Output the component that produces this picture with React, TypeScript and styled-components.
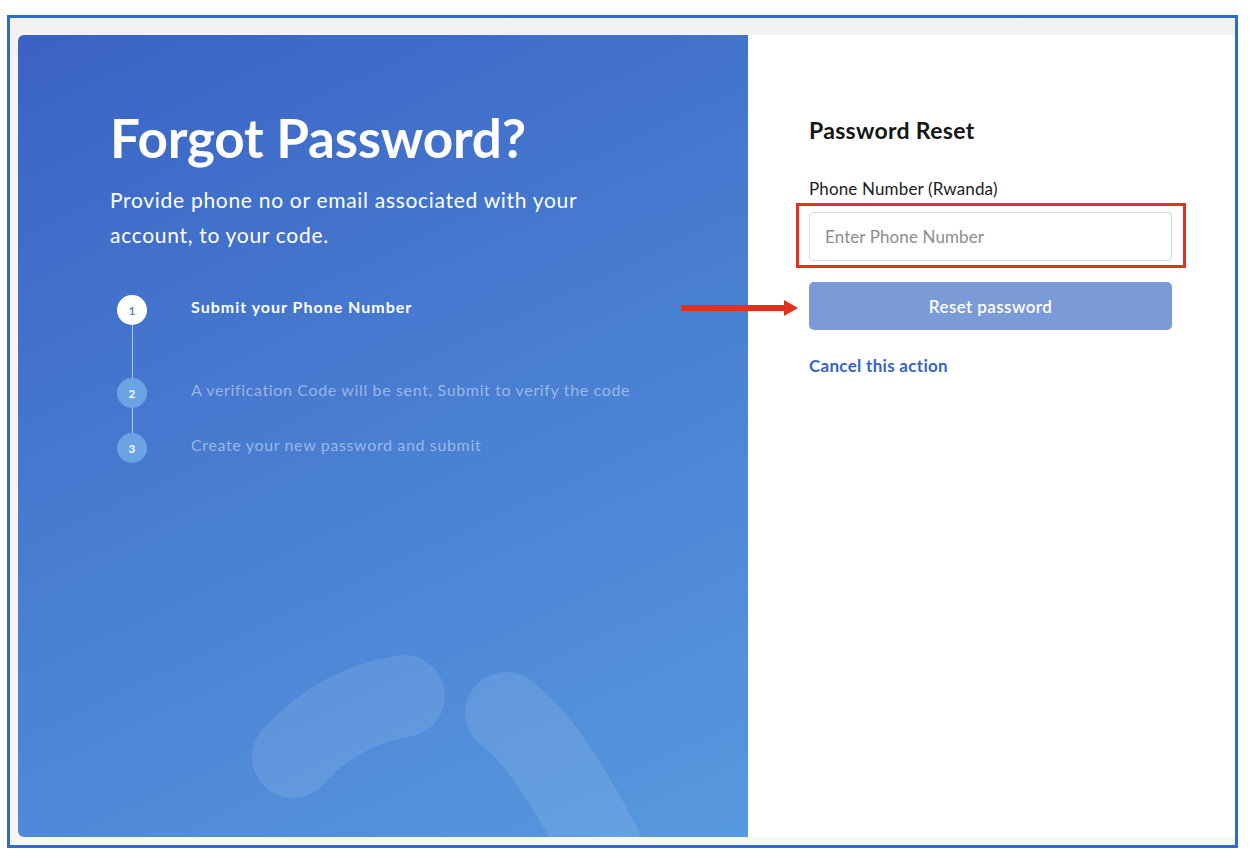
import React from "react";
import styled, { createGlobalStyle } from "styled-components";

const GlobalStyle = createGlobalStyle`
  body {
    margin: 0;
    background: #ffffff;
    font-family: Lato, "Open Sans", sans-serif;
  }
  * {
    box-sizing: border-box;
  }
`;

const steps = [
  { n: 1, text: "Submit your Phone Number", active: true, after: 53 },
  { n: 2, text: "A verification Code will be sent, Submit to verify the code", active: false, after: 25 },
  { n: 3, text: "Create your new password and submit", active: false, after: 0 },
];

export default function App() {
  return (
    <>
      <GlobalStyle />
      <Frame>
        <Card>
          <Hero>
            <Swirls width="730" height="802" viewBox="0 0 730 802">
              <path d="M 275 722 Q 320 672 386 661" />
              <path d="M 488 678 Q 527 705 582 810" />
            </Swirls>
            <Title>Forgot Password?</Title>
            <Lead>
              Provide phone no or email associated with your
              <br />
              account, to your code.
            </Lead>
            <StepList>
              {steps.map((s) => (
                <React.Fragment key={s.n}>
                  <Step>
                    <Bullet $active={s.active}>{s.n}</Bullet>
                    <StepText $active={s.active}>{s.text}</StepText>
                  </Step>
                  {s.after > 0 && <Connector $h={s.after} />}
                </React.Fragment>
              ))}
            </StepList>
          </Hero>
          <FormPane>
            <FormTitle>Password Reset</FormTitle>
            <Label>Phone Number (Rwanda)</Label>
            <Highlight>
              <Input placeholder="Enter Phone Number" />
            </Highlight>
            <ButtonRow>
              <Arrow width="117" height="18" viewBox="0 0 117 18">
                <rect x="0" y="6" width="105" height="6" />
                <polygon points="103,1 117,9 103,17" />
              </Arrow>
              <ResetButton>Reset password</ResetButton>
            </ButtonRow>
            <CancelLink href="#">Cancel this action</CancelLink>
          </FormPane>
        </Card>
      </Frame>
    </>
  );
}

const Frame = styled.div`
  margin: 15px 0 0 7px;
  width: 1231px;
  height: 833px;
  border: 3px solid #2e6bc8;
  background: linear-gradient(#f1f1f1, #f6f6f6 60px, #f6f6f6);
  padding: 17px 0 8px 8px;
  display: flex;
`;

const Card = styled.div`
  flex: 1;
  display: flex;
`;

const Hero = styled.section`
  position: relative;
  overflow: hidden;
  width: 730px;
  border-radius: 6px 0 0 6px;
  background: linear-gradient(155deg, #3a62c4 0%, #4679cf 40%, #4f89d7 70%, #5799de 100%);
  padding: 72px 40px 0 92px;
  color: #ffffff;
`;

const Swirls = styled.svg`
  position: absolute;
  left: 0;
  top: 0;
  fill: none;
  stroke: rgba(255, 255, 255, 0.1);
  stroke-width: 82;
  stroke-linecap: round;
`;

const Title = styled.h1`
  position: relative;
  margin: 0;
  font-size: 53px;
  line-height: 62px;
  font-weight: 700;
  letter-spacing: -0.2px;
`;

const Lead = styled.p`
  position: relative;
  margin: 13px 0 0;
  font-size: 21px;
  line-height: 35px;
  font-weight: 400;
  letter-spacing: 0.7px;
`;

const StepList = styled.div`
  position: relative;
  margin: 43px 0 0 7px;
  display: flex;
  flex-direction: column;
`;

const Step = styled.div`
  display: flex;
  align-items: center;
  gap: 44px;
`;

const Bullet = styled.span<{ $active: boolean }>`
  flex: none;
  width: 30px;
  height: 30px;
  border-radius: 50%;
  display: flex;
  align-items: center;
  justify-content: center;
  font-size: 11px;
  font-weight: 700;
  background: ${(p) => (p.$active ? "#ffffff" : "#6aa4e4")};
  color: ${(p) => (p.$active ? "#4c82d6" : "#ffffff")};
`;

const StepText = styled.span<{ $active: boolean }>`
  padding-bottom: 7px;
  font-size: 16px;
  font-weight: ${(p) => (p.$active ? 700 : 400)};
  letter-spacing: ${(p) => (p.$active ? "1px" : "0.64px")};
  color: ${(p) => (p.$active ? "#ffffff" : "rgba(255, 255, 255, 0.45)")};
`;

const Connector = styled.div<{ $h: number }>`
  width: 1px;
  height: ${(p) => p.$h}px;
  margin-left: 15px;
  background: rgba(255, 255, 255, 0.6);
`;

const FormPane = styled.section`
  flex: 1;
  background: #ffffff;
  padding: 82px 0 0 61px;
  display: flex;
  flex-direction: column;
  align-items: flex-start;
`;

const FormTitle = styled.h2`
  margin: 0;
  font-size: 23px;
  line-height: 27px;
  font-weight: 700;
  letter-spacing: 0.3px;
  color: #161616;
`;

const Label = styled.label`
  margin-top: 35px;
  font-size: 17px;
  line-height: 20px;
  letter-spacing: 0.15px;
  color: #1c1c1c;
`;

const Highlight = styled.div`
  position: relative;
  margin-top: 13px;
  &::after {
    content: "";
    position: absolute;
    left: -13px;
    right: -14px;
    top: -9px;
    bottom: -7px;
    border: 3px solid #e3301f;
    pointer-events: none;
  }
`;

const Input = styled.input`
  display: block;
  width: 363px;
  height: 49px;
  border: 1px solid #d9d9d9;
  border-radius: 4px;
  padding: 0 15px;
  font-family: Lato, sans-serif;
  font-size: 17px;
  letter-spacing: 0.1px;
  color: #333;
  outline: none;
  &::placeholder {
    color: #8c8c8c;
  }
`;

const ButtonRow = styled.div`
  position: relative;
  margin-top: 21px;
`;

const Arrow = styled.svg`
  position: absolute;
  left: -128px;
  top: 17px;
  fill: #e3301f;
`;

const ResetButton = styled.button`
  display: block;
  width: 363px;
  height: 48px;
  border: none;
  border-radius: 5px;
  background: #7b9ad8;
  color: #ffffff;
  font-family: Lato, sans-serif;
  font-size: 17px;
  font-weight: 600;
  letter-spacing: 0.4px;
`;

const CancelLink = styled.a`
  margin-top: 26px;
  font-size: 17px;
  line-height: 19px;
  font-weight: 700;
  letter-spacing: 0.3px;
  color: #3564c6;
  text-decoration: none;
`;
